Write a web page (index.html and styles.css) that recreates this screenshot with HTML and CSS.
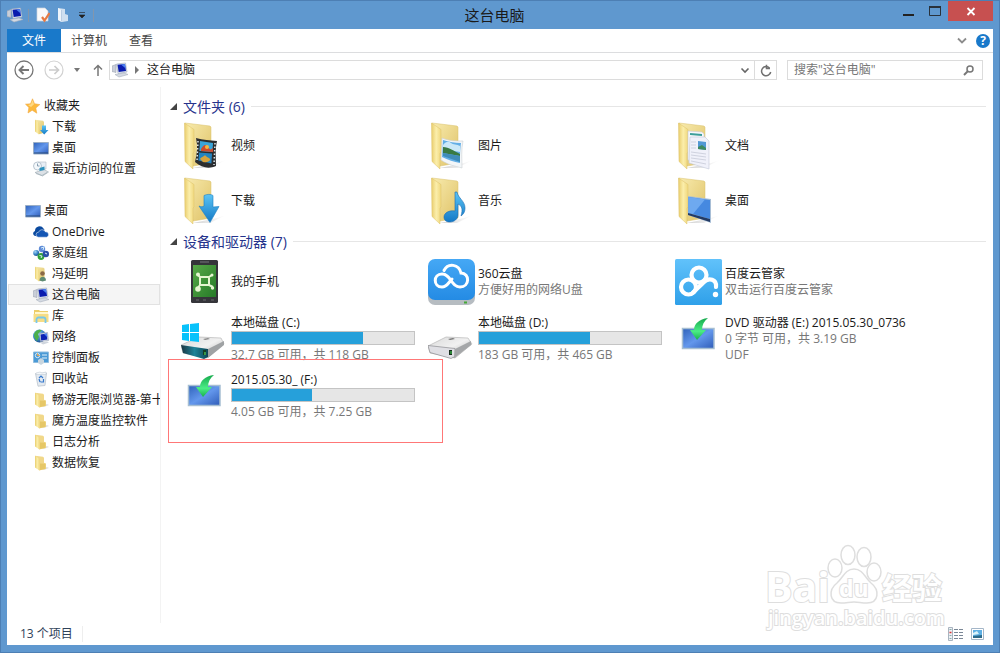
FILE: index.html
```html
<!DOCTYPE html>
<html lang="zh-CN">
<head>
<meta charset="utf-8">
<title>这台电脑</title>
<link rel="stylesheet" href="styles.css">
</head>
<body>
<svg class="defs" aria-hidden="true">
  <defs>
    <linearGradient id="gFlap" x1="0" y1="0" x2="1" y2="0"><stop offset="0" stop-color="#e9cd6c"/><stop offset=".5" stop-color="#fbeeab"/><stop offset="1" stop-color="#f0d87e"/></linearGradient>
    <linearGradient id="gBack" x1="0" y1="0" x2="1" y2="1"><stop offset="0" stop-color="#f8ebae"/><stop offset="1" stop-color="#dfc267"/></linearGradient>
    <linearGradient id="gBlue" x1="0" y1="0" x2="1" y2="1"><stop offset="0" stop-color="#2f62ba"/><stop offset=".5" stop-color="#6397ec"/><stop offset="1" stop-color="#2f5cb8"/></linearGradient>
    <linearGradient id="gArrow" x1="0" y1="0" x2="0" y2="1"><stop offset="0" stop-color="#5cc4f4"/><stop offset="1" stop-color="#1379c6"/></linearGradient>
    <linearGradient id="gGreen" x1="0" y1="0" x2="0" y2="1"><stop offset="0" stop-color="#15a94c"/><stop offset=".6" stop-color="#4bed86"/><stop offset="1" stop-color="#18b04c"/></linearGradient>
    <linearGradient id="gPhone" x1="0" y1="0" x2="1" y2="1"><stop offset="0" stop-color="#57a947"/><stop offset="1" stop-color="#267a28"/></linearGradient>
    <linearGradient id="gCloud" x1="0" y1="0" x2="0" y2="1"><stop offset="0" stop-color="#45a8f5"/><stop offset="1" stop-color="#248be4"/></linearGradient>
    <linearGradient id="gPan" x1="0" y1="0" x2="0" y2="1"><stop offset="0" stop-color="#61c2fb"/><stop offset="1" stop-color="#2fa0e9"/></linearGradient>
    <linearGradient id="gMetal" x1="0" y1="0" x2="1" y2="1"><stop offset="0" stop-color="#d9d9d9"/><stop offset=".5" stop-color="#f1f1f1"/><stop offset="1" stop-color="#a7a7a7"/></linearGradient>
    <linearGradient id="gTeal" x1="0" y1="0" x2="1" y2="0"><stop offset="0" stop-color="#1b3440"/><stop offset=".5" stop-color="#218398"/><stop offset="1" stop-color="#0d4554"/></linearGradient>
    <linearGradient id="gShade" x1="0" y1="0" x2="1" y2="0"><stop offset="0" stop-color="#999" stop-opacity=".45"/><stop offset="1" stop-color="#aaa" stop-opacity="0"/></linearGradient>
    <radialGradient id="gGlobe" cx=".35" cy=".3" r=".8"><stop offset="0" stop-color="#a9d8f5"/><stop offset=".5" stop-color="#3d8acb"/><stop offset="1" stop-color="#174582"/></radialGradient>
  </defs>

  <symbol id="pc" viewBox="0 0 16 16"><path d="M0 4l4-1.500v8l-4-1z" fill="#c9ced8" stroke="#9da5b2" stroke-width=".6"/><path d="M4.500 2l9-1 1.500 9-9 1.500z" fill="#dfe5ee" stroke="#9ba7ba" stroke-width=".6"/><path d="M5.500 2.700l7.500-.8 1 7-7.300 1.200z" fill="#0a1cae"/><path d="M9 2.400l4-.5.7 4.500z" fill="#4b7ff0"/><path d="M3 12.500l9-1.500 4 1.500-9 2.500z" fill="#d5dae2" stroke="#a7b0be" stroke-width=".6"/></symbol>
  <symbol id="folder" viewBox="0 0 16 16"><path d="M8 14l6-2 2 1-5 2z" fill="#999" opacity=".3"/><path d="M2 .8l8 .9 1 1v5l2 .8v5.500l-7 1.500z" fill="#f1d88a"/><path d="M7 8.500l5.500.2v5L7 15z" fill="#e6c767"/><path d="M2 .8L6.500 4v11.500L2 12.500z" fill="url(#gFlap)"/></symbol>
  <symbol id="down" viewBox="0 0 16 16"><path d="M2 .8l8 .9 1 1v11l-5 1.500z" fill="url(#gBack)"/><path d="M2 .8L6 4v11.500l-4-3z" fill="url(#gFlap)"/><path d="M9 6.500h4V11h2.500l-4.300 4.500L7 11h2z" fill="url(#gArrow)"/></symbol>
  <symbol id="desk" viewBox="0 0 16 16"><path d="M.5 2.500h15v11.500H.5z" fill="url(#gBlue)" stroke="#9aaec6"/><path d="M1 12.500h14v1H1z" fill="#284a7b"/></symbol>
  <symbol id="recent" viewBox="0 0 16 16"><path d="M5 1h8v7H5z" fill="#e8eef5" stroke="#aeb8c5" stroke-width=".6"/><circle cx="4.500" cy="5" r="4" fill="#f4f8fb" stroke="#a8b6c4" stroke-width=".8"/><path d="M4.500 2.500V5h2" stroke="#708aa2" fill="none" stroke-width=".8"/><path d="M2 11.500l9-3 4.500 2.500-6 4z" fill="#dce1e6" stroke="#9ba8b0" stroke-width=".6"/><path d="M6.500 7l5-1.500v3.500l-5 1z" fill="#2e91bd"/><path d="M3 12.500l6 2 5-3" stroke="#a3b2ba" fill="none" stroke-width=".8"/></symbol>
  <symbol id="onedrive" viewBox="0 0 16 16"><path d="M2 12A2.600 2.600 0 0 1 2 7 4.600 4.600 0 0 1 10.500 4.500a4 4 0 0 1 1 1.600L7 7.500 4 12z" fill="#0b4a9f"/><path d="M5.500 13.200a2.500 2.500 0 0 1 .1-5 3.700 3.700 0 0 1 6.900-.3 2.700 2.700 0 0 1 1 5.300z" fill="#1456b4" stroke="#fff" stroke-width=".5"/></symbol>
  <symbol id="home" viewBox="0 0 16 16"><circle cx="3.200" cy="8" r="3" fill="url(#gGlobe)"/><circle cx="9" cy="4" r="3.200" fill="#5f8cd8"/><circle cx="8" cy="11.500" r="3.400" fill="#31a03b"/><circle cx="12.800" cy="9" r="3.200" fill="#294fa7"/><path d="M8 3l3-1-1 3M6.500 10.500l2.500.5-1 2M12 8l2 1" stroke="#d6eefb" fill="none"/></symbol>
  <symbol id="user" viewBox="0 0 16 16"><path d="M2 .8l8.500.9 1 1v11l-5.500 1.500z" fill="url(#gBack)"/><path d="M2 .8L6 4v11.500l-4-3z" fill="url(#gFlap)"/><circle cx="9.500" cy="7.500" r="2.300" fill="#8b6a48"/><path d="M6.500 14.500c0-5 6.500-5 6.500 0l-3.500 1z" fill="#5f8c74"/></symbol>
  <symbol id="library" viewBox="0 0 16 16"><path d="M1 2h5l1 1h8v10H1z" fill="#eccd69"/><path d="M2 4h13v2.500H2z" fill="#fff7cf"/><path d="M.5 6h15v8H.5z" fill="#f6dd86"/><path d="M3.500 15v-3.500a2 2 0 0 1 2-2h5a2 2 0 0 1 2 2V15" fill="none" stroke="#79c8e8" stroke-width="1.800"/></symbol>
  <symbol id="network" viewBox="0 0 16 16"><circle cx="6.500" cy="7" r="6.500" fill="url(#gGlobe)"/><path d="M1.500 4c2-4 6-3.500 7-2.500L5 5l1 3-2 4C1 9 .5 6 1.500 4z" fill="#4baf4a"/><path d="M6.500 4.500l8-1 1 8-8 1z" fill="#dfe5ee" stroke="#8d99ad" stroke-width=".6"/><path d="M7.500 5.400l6.200-.8.7 6-6.200.8z" fill="#0d23b4"/><path d="M11 5l3-.4.500 4z" fill="#4b7ff0"/><path d="M7 13.500l7-1 2 1-6 2z" fill="#cfd5dd"/></symbol>
  <symbol id="control" viewBox="0 0 16 16"><path d="M.5 2h15v10.500H.5z" fill="#4b9ad6" stroke="#8fbde0"/><circle cx="4.500" cy="5.500" r="2.200" fill="none" stroke="#d8edfa"/><path d="M4.500 3.500v2h2" stroke="#f6a742" fill="none"/><path d="M9 5h5M9 8h5" stroke="#e3f2fb"/><path d="M5 10l3-2 3 2v3l-3 2-3-2z" fill="#c9d6df"/></symbol>
  <symbol id="bin" viewBox="0 0 16 16"><path d="M2.500 2.500L13.500 2 12 14.500l-7 .7z" fill="#e4eaf0" stroke="#b5bfc9" stroke-width=".7"/><path d="M3 2l4-1 2 1 4-1v2.500H3z" fill="#f4f7fa" stroke="#b9c2cc" stroke-width=".5"/><path d="M6 7l2-2 2 2M10.500 8v3H7.500M6 8l1 3" stroke="#3578cd" fill="none" stroke-width="1.200"/></symbol>
  <symbol id="star" viewBox="0 0 16 16"><path d="M7.500.8l2 4.900 5.300.9-4 3.400 1 5.200-4.600-3L3 15l.9-5.500L.5 6.200l5-.4z" fill="#fcb93c" stroke="#f2a944" stroke-width=".6"/><path d="M7.500 2L9 6.200 6 9 3 7l3-.8z" fill="#ffd982"/></symbol>

  <symbol id="base48" viewBox="0 0 48 48"><path d="M12 46l24-5 9-3-16 8z" fill="url(#gShade)"/><path d="M4 1l25 3 1 1v36l-18 3z" fill="url(#gBack)" stroke="#d9c06b" stroke-width=".5"/><path d="M3.500 1L13 7.500v22l-1 2V47l-8-7.500z" fill="url(#gFlap)" stroke="#dcc169" stroke-width=".5"/></symbol>
</svg>

<div class="window">
  <header class="titlebar">
    <div class="quick">
      <svg class="i16"><use href="#pc"/></svg><span class="sep"></span>
      <button aria-label="属性"><svg class="i16" viewBox="0 0 16 16"><path d="M3 1h8l3 3v10H3z" fill="#f9f9fa" stroke="#cbd3dc" stroke-width=".7"/><path d="M8 10l2.500 3.500L15.500 6" stroke="#e77942" stroke-width="2.200" fill="none"/></svg></button>
      <button aria-label="新建文件夹"><svg class="i16" viewBox="0 0 16 16"><path d="M3 1l7 1v5l3 1v6l-6 1-4-2z" fill="#cfdff0"/><path d="M3 1l3.500 2v12L3 13z" fill="#eef4fb"/><path d="M6.500 3v11" stroke="#a9c0da" stroke-width=".7"/></svg></button>
      <button class="narrow" aria-label="自定义"><svg width="8" height="8" viewBox="0 0 8 8"><path d="M1 1.500h6M1 4h6L4 7z" stroke="#222" stroke-width=".6" fill="#222"/></svg></button><span class="sep"></span>
    </div>
    <h1>这台电脑</h1>
    <div class="winbtns">
      <button aria-label="最小化"><svg width="12" height="12" viewBox="0 0 12 12"><path d="M1 10h11" stroke="#222" stroke-width="2"/></svg></button>
      <button aria-label="最大化"><svg width="12" height="10" viewBox="0 0 12 10"><path d="M.5.500h11v9H.5z" fill="none" stroke="#29323c"/><path d="M0 1h12" stroke="#29323c" stroke-width="2"/></svg></button>
      <button class="close" aria-label="关闭"><svg width="10" height="9" viewBox="0 0 10 9"><path d="M1.500 1l7 7M8.500 1l-7 7" stroke="#fff" stroke-width="1.800"/></svg></button>
    </div>
  </header>

  <div class="client">
    <nav class="ribbon">
      <button class="tab file">文件</button><button class="tab">计算机</button><button class="tab">查看</button>
      <span class="grow"></span>
      <button class="tool" aria-label="展开功能区"><svg width="12" height="8" viewBox="0 0 12 8"><path d="M2 1.500l4 4 4-4" fill="none" stroke="#8c8c8c" stroke-width="1.800"/></svg></button>
      <button class="help" aria-label="帮助">?</button>
    </nav>

    <div class="address">
      <button aria-label="后退"><svg width="20" height="20" viewBox="0 0 20 20"><circle cx="10" cy="10" r="9" fill="none" stroke="#777" stroke-width="1.300"/><path d="M15 10H6M9.500 6L5.500 10l4 4" fill="none" stroke="#777" stroke-width="1.900"/></svg></button>
      <button aria-label="前进"><svg width="20" height="20" viewBox="0 0 20 20"><circle cx="10" cy="10" r="9" fill="none" stroke="#d2d2d2" stroke-width="1.200"/><path d="M5 10h9M10.500 6l4 4-4 4" fill="none" stroke="#ccc" stroke-width="1.700"/></svg></button>
      <button class="hist" aria-label="历史"><svg width="6" height="4" viewBox="0 0 6 4"><path d="M0 0h6L3 4z" fill="#777"/></svg></button>
      <button aria-label="上移"><svg width="12" height="12" viewBox="0 0 12 12"><path d="M6 12V2M2 5.500L6 1.500l4 4" fill="none" stroke="#777" stroke-width="1.500"/></svg></button>
      <div class="path">
        <svg class="i16"><use href="#pc"/></svg>
        <svg class="crumb" width="4" height="8" viewBox="0 0 4 8"><path d="M0 0l4 4-4 4z" fill="#777"/></svg>
        <a href="#pc">这台电脑</a><span class="grow"></span>
        <button aria-label="下拉"><svg width="10" height="7" viewBox="0 0 10 7"><path d="M1.500 1.500L5 5l3.500-3.500" fill="none" stroke="#666" stroke-width="1.600"/></svg></button>
        <button class="refresh" aria-label="刷新"><svg width="12" height="13" viewBox="0 0 12 13"><path d="M9.500 4A4.600 4.600 0 1 0 10.700 8M6.500.8V4.500H10" fill="none" stroke="#707070" stroke-width="1.500"/></svg></button>
      </div>
      <label class="search"><input type="text" aria-label="搜索" placeholder='搜索"这台电脑"'><svg width="11" height="11" viewBox="0 0 11 11"><circle cx="7" cy="4" r="3" fill="none" stroke="#777" stroke-width="1.500"/><path d="M5 6L1 10" stroke="#777" stroke-width="1.900"/></svg></label>
    </div>

    <div class="body">
      <aside class="tree">
        <ul>
          <li class="root"><svg class="i16"><use href="#star"/></svg>收藏夹</li>
          <li><svg class="i16"><use href="#down"/></svg>下载</li>
          <li><svg class="i16"><use href="#desk"/></svg>桌面</li>
          <li><svg class="i16"><use href="#recent"/></svg>最近访问的位置</li>
        </ul>
        <ul>
          <li class="root"><svg class="i16"><use href="#desk"/></svg>桌面</li>
          <li><svg class="i16"><use href="#onedrive"/></svg>OneDrive</li>
          <li><svg class="i16"><use href="#home"/></svg>家庭组</li>
          <li><svg class="i16"><use href="#user"/></svg>冯延明</li>
          <li class="selected"><svg class="i16"><use href="#pc"/></svg>这台电脑</li>
          <li><svg class="i16"><use href="#library"/></svg>库</li>
          <li><svg class="i16"><use href="#network"/></svg>网络</li>
          <li><svg class="i16"><use href="#control"/></svg>控制面板</li>
          <li><svg class="i16"><use href="#bin"/></svg>回收站</li>
          <li><svg class="i16"><use href="#folder"/></svg>畅游无限浏览器-第十</li>
          <li><svg class="i16"><use href="#folder"/></svg>魔方温度监控软件</li>
          <li><svg class="i16"><use href="#folder"/></svg>日志分析</li>
          <li><svg class="i16"><use href="#folder"/></svg>数据恢复</li>
        </ul>
      </aside>

      <main class="content">
        <section>
          <h2><svg width="7" height="7" viewBox="0 0 7 7"><path d="M7 0v7H0z" fill="#444"/></svg>文件夹 (6)</h2>
          <div class="grid folders">
            <div class="item"><svg class="i48" viewBox="0 0 48 48"><use href="#base48"/><path d="M15 16c7 2 14 2 21 3-2 9-1 16-1 25-7 3-14 2-21-4 2-8 3-16 1-24z" fill="#2b2d2f"/><path d="M19 19l13 2-.6 9-13-1z" fill="#3aa4d8"/><path d="M18 30.500l13 1-.6 10-13-3z" fill="#2384c0"/><path d="M20 27c3-5 5-5 7-2s3 3 5 1v4l-12-1z" fill="#cf4b2c"/><path d="M19 37c2-3 4-2 5-4 2 3 4 2 5 4s-4 4-7 3z" fill="#d8a33c"/><circle cx="26" cy="25" r="2" fill="#f2b640"/><path d="M17 19l-1 20M34 21l-1 22" stroke="#dce7ec" stroke-width="1.500" stroke-dasharray="1.500 2"/></svg><div class="info"><p>视频</p></div></div>
            <div class="item"><svg class="i48" viewBox="0 0 48 48"><use href="#base48"/><path d="M14 16c7 3 14 3 21 3-2 9-1 18-1 27-7-2-14-3-21-8z" fill="#f3f6f8" stroke="#cbd0d4" stroke-width=".6"/><path d="M15 18c6 2 12 3 18 3-1 7-1 12-1 20-6-1-12-3-18-6z" fill="#62aee6"/><path d="M15 23c3-4 6-4 8-2s6 1 9 3v6l-17-3z" fill="#cae8f8"/><path d="M15 25c6 0 11 4 17 7v2l-17-3z" fill="#397a43"/><path d="M15 31l17 3v6l-17-6z" fill="#3f8cb9"/></svg><div class="info"><p>图片</p></div></div>
            <div class="item"><svg class="i48" viewBox="0 0 48 48"><use href="#base48"/><path d="M13 9l14 1 2 2v29l-16-3z" fill="#f7f8fc" stroke="#c6cad8" stroke-width=".6"/><path d="M15 12l12 1" stroke="#3c9e99" stroke-width="2"/><path d="M15 15l15 0 4 4v28l-20-6z" fill="#f0f1fa" stroke="#c3c7d8" stroke-width=".6"/><path d="M23 19l8 1v8l-8-1z" fill="#5298d4"/><path d="M23 25l4-2 4 3v2l-8-1z" fill="#3f8a60"/><path d="M16 20h5M16 23h5M16 26h5M16 30l15 2M16 33l15 2M16 36l15 2M16 39l15 3" stroke="#cfd2df"/></svg><div class="info"><p>文档</p></div></div>
            <div class="item"><svg class="i48" viewBox="0 0 48 48"><use href="#base48"/><path d="M23 18.500c3-1.500 7-1.500 9 0V30l6-.5L29 45.500 18 29c2 1 4 1 5 0z" fill="url(#gArrow)" stroke="#1c7fc5" stroke-width=".6"/></svg><div class="info"><p>下载</p></div></div>
            <div class="item"><svg class="i48" viewBox="0 0 48 48"><use href="#base48"/><path d="M27 15h2c1 6 8 9 8 16 0 3-1 6-4 8 2-7 1-10-3-12v11c0 4-4 7-8 7s-6-2-6-5c0-4 5-7 11-6z" fill="url(#gArrow)" stroke="#1869b2" stroke-width=".6"/></svg><div class="info"><p>音乐</p></div></div>
            <div class="item"><svg class="i48" viewBox="0 0 48 48"><use href="#base48"/><path d="M13 19l23 3v24l-23-8z" fill="#a8bed6"/><path d="M13.500 20l21.500 3v19l-21.500-6z" fill="#4689e0"/><path d="M13.500 20L30 22.500 18 37l-4.500-1z" fill="#6ea9f0"/><path d="M13 36l22 6v3l-22-7z" fill="#233b64"/></svg><div class="info"><p>桌面</p></div></div>
          </div>
        </section>

        <section>
          <h2><svg width="7" height="7" viewBox="0 0 7 7"><path d="M7 0v7H0z" fill="#444"/></svg>设备和驱动器 (7)</h2>
          <div class="grid devices">
            <div class="item"><svg class="i48" viewBox="0 0 48 48"><rect x="10" y="2" width="27" height="43" rx="1.500" fill="#35353a"/><path d="M19 4h9" stroke="#77777b"/><path d="M12 7h23v32H12z" fill="url(#gPhone)"/><path d="M19 19h9v8h-9zM19 19l-3-3M28 19l3-2M28 27l4 2M19 27l-3 4" stroke="#e5f5d0" stroke-width="2" fill="none"/><circle cx="17" cy="16.500" r="2" fill="#e5f5d0"/><circle cx="31" cy="17" r="1.500" fill="#e5f5d0"/><circle cx="17" cy="31" r="2.800" fill="#e5f5d0"/><circle cx="31.500" cy="30" r="1.700" fill="#e5f5d0"/><path d="M15 42h3M22 42h3M30 42h3" stroke="#6a6a6e"/></svg><div class="info"><p>我的手机</p></div></div>
            <div class="item"><svg class="i48" viewBox="0 0 48 48"><rect y="4" width="47" height="43" rx="7" fill="#b6bcc1"/><rect y="1" width="47" height="41" rx="7" fill="url(#gCloud)"/><path d="M16 12.500C20 4.500 31 6 33 15c9 0 9 14-1 14-9 0-9-13-18-13-9 0-9 13 0 13 5 0 6-4 10-8" fill="none" stroke="#fff" stroke-width="3" stroke-linecap="round"/><path d="M36 44.500h3" stroke="#45a936" stroke-width="2"/></svg><div class="info"><p>360云盘</p><p class="sub">方便好用的网络U盘</p></div></div>
            <div class="item"><svg class="i48" viewBox="0 0 48 48"><rect y="1" width="47" height="46" rx="1.500" fill="url(#gPan)"/><circle cx="24" cy="17" r="7.500" fill="none" stroke="#fff" stroke-width="4.200"/><circle cx="13.500" cy="29" r="7.500" fill="none" stroke="#fff" stroke-width="4.200"/><path d="M18 34.500L28 25c6-7 14-3 13 4" fill="none" stroke="#fff" stroke-width="4.200" stroke-linecap="round"/><circle cx="40.500" cy="36.500" r="2.700" fill="#fff"/></svg><div class="info"><p>百度云管家</p><p class="sub">双击运行百度云管家</p></div></div>

            <div class="item"><svg class="i48" viewBox="0 0 48 48"><path d="M0 30l18-8 22 1 3 6-17 14-24-5z" fill="url(#gMetal)" stroke="#a0a0a0" stroke-width=".5"/><path d="M0 30l27 4v8l-4 2-21-6z" fill="url(#gTeal)"/><path d="M27 34l16-8v4L27 43z" fill="#9fa2a4"/><path d="M22 35h3v5h-3z" fill="#153d22"/><path d="M24 37v3" stroke="#5cf26c"/><path d="M1 10l7-1v8H1zM9 9l9-1v9H9zM1 18h7v8l-7-1zM9 18h9v9l-9-1z" fill="#08c2fb"/><path d="M22 24l5-1 2 1-5 1z" fill="#888"/></svg><div class="info"><p>本地磁盘 (C:)</p><div class="bar"><span style="width:72%"></span></div><p class="sub">32.7 GB 可用，共 118 GB</p></div></div>
            <div class="item"><svg class="i48" viewBox="0 0 48 48"><path d="M0 31l18-9 22 1 4 6-17 14-25-5z" fill="url(#gMetal)" stroke="#a0a0a0" stroke-width=".5"/><path d="M0 30.500l27 3v8l-4 2-21-6z" fill="#dfdfe4" stroke="#8d8d91" stroke-width=".7"/><path d="M27 34l16-8v4L26 43z" fill="#a5a7a9"/><path d="M21 35h3v5h-3z" fill="#192d1e"/><path d="M23 36v3" stroke="#40df50"/><path d="M20 24l5-1 2 1-5 1z" fill="#777"/></svg><div class="info"><p>本地磁盘 (D:)</p><div class="bar"><span style="width:61%"></span></div><p class="sub">183 GB 可用，共 465 GB</p></div></div>
            <div class="item"><svg class="i48" viewBox="0 0 48 48"><path d="M7.500 13.500h31.500v20H7.500z" fill="url(#gBlue)" stroke="#a6bed2" stroke-width="1.500"/><path d="M33 3c-9 1-14 6-14 12h-4l7 10 9-10h-4c0-5 2-9 6-12z" fill="url(#gGreen)"/></svg><div class="info"><p>DVD 驱动器 (E:) 2015.05.30_0736</p><p class="sub">0 字节 可用，共 3.19 GB</p><p class="sub">UDF</p></div></div>

            <div class="item marked"><svg class="i48" viewBox="0 0 48 48"><path d="M7.500 13.500h31.500v20H7.500z" fill="url(#gBlue)" stroke="#a6bed2" stroke-width="1.500"/><path d="M33 3c-9 1-14 6-14 12h-4l7 10 9-10h-4c0-5 2-9 6-12z" fill="url(#gGreen)"/></svg><div class="info"><p>2015.05.30_ (F:)</p><div class="bar"><span style="width:44%"></span></div><p class="sub">4.05 GB 可用，共 7.25 GB</p></div></div>
          </div>
        </section>
      </main>
    </div>

    <footer class="status">
      <span class="count">13 个项目</span><span class="grow"></span>
      <button aria-label="详细信息"><svg width="16" height="14" viewBox="0 0 16 14"><path d="M.5.500h4v13h-4z" fill="#eef1f5" stroke="#a9b4c0"/><path d="M1.500 5.500h2" stroke="#d33" stroke-width="1.500"/><path d="M1.500 2.500h2M1.500 8.500h2M1.500 11.500h2" stroke="#8aa"/><path d="M6 2.500h10M6 5.500h10M6 8.500h10M6 11.500h10" stroke="#7a8796" stroke-dasharray="4 1"/></svg></button>
      <button aria-label="大图标"><svg width="13" height="12" viewBox="0 0 13 12"><path d="M.5.500h12v11H.5z" fill="#fff" stroke="#a4b6c8"/><path d="M2 2h9v8H2z" fill="#5eb0e4"/><path d="M2 5l4-2 2 3-6 1z" fill="#d9f2fb"/><path d="M2 8l9-1v3H2z" fill="#2c6a8a"/></svg></button>
    </footer>

    <svg class="watermark" width="180" height="90" viewBox="0 0 180 90">
      <g fill="#fff" stroke="#dedede" stroke-width="1.500">
        <ellipse cx="68" cy="27" rx="7" ry="9"/><ellipse cx="81" cy="14" rx="7" ry="9.500"/><ellipse cx="97" cy="16" rx="7" ry="9.500"/><ellipse cx="107" cy="31" rx="7" ry="9"/>
        <path d="M87 28c9 0 11 9 17 14 9 7 8 20-4 20-6 0-8-1-13-1s-7 1-13 1c-12 0-13-13-4-20 6-5 8-14 17-14z"/>
      </g>
      <g class="mark">
        <text x="-2" y="61" font-size="41">Bai</text><text x="72" y="56" font-size="23">du</text><text x="115" y="58" font-size="30">经验</text><text class="url" x="1" y="84" font-size="20">jingyan.baidu.com</text>
      </g>
    </svg>
  </div>
</div>
</body>
</html>
```
FILE: styles.css
```css
*, *::after { box-sizing: border-box; }
body { margin: 0; font: 12px/16px "Open Sans", "Noto Sans", "Noto Sans CJK SC", sans-serif; color: #1a1a1a; }
h1, h2, p, ul { margin: 0; padding: 0; font-weight: 400; }
ul { list-style: none; }
button { border: 0; padding: 0; background: none; font: inherit; color: inherit; display: flex; align-items: center; justify-content: center; }
svg { flex: none; display: block; }
.defs { position: absolute; width: 0; height: 0; }
.i16 { width: 16px; height: 16px; }
.i48 { width: 48px; height: 48px; }
.grow { flex: 1; }

.window { min-height: 100vh; display: flex; flex-direction: column; background: #5f98cf; border: 1px solid #4d7fb4; padding: 0 6px 7px; }
.titlebar { display: flex; height: 28px; }
.quick { display: flex; align-items: center; gap: 5px; width: 88px; }
.quick .narrow { width: 12px; }
.sep { width: 1px; height: 13px; background: #8296ad; }
h1 { flex: 1; text-align: center; font-size: 15px; line-height: 28px; }
.winbtns { display: flex; align-items: flex-start; }
.winbtns button { width: 27px; height: 20px; }
.winbtns .close { width: 45px; background: #c75050; }

.client { flex: 1; display: flex; flex-direction: column; background: #fff; position: relative; }
.ribbon { display: flex; align-items: center; height: 24px; border-bottom: 1px solid #dcdddf; color: #444; }
.tab { height: 23px; padding: 0 10px; }
.tab + .tab { margin-right: 2px; }
.tab.file { width: 54px; background: #1979ca; color: #fff; }
.tool { width: 28px; height: 20px; }
.help { width: 14px; height: 14px; margin-right: 3px; border-radius: 7px; background: #1979ca; color: #fff; font-weight: 700; }

.address { display: flex; align-items: center; height: 34px; padding: 0 10px 0 7px; }
.address > button + button { margin-left: 10px; }
.address > button.hist + button { margin-left: 12px; }
.path { flex: 1; display: flex; align-items: center; height: 20px; margin: 0 10px 0 5px; border: 1px solid #dcdcdc; padding-left: 2px; }
.path a { color: inherit; text-decoration: none; }
.crumb { margin: 0 8px 0 7px; }
.path button { width: 18px; height: 18px; }
.path .refresh { width: 22px; border-left: 1px solid #dcdcdc; }
.search { display: flex; align-items: center; width: 196px; height: 20px; border: 1px solid #dcdcdc; padding: 0 8px 0 6px; }
.search input { flex: 1; min-width: 0; border: 0; padding: 0; outline: 0; font: inherit; background: none; }
.search input::placeholder { color: #777; opacity: 1; }

.body { flex: 1; display: flex; }
.tree { width: 154px; padding: 8px 0 0 1px; border-right: 1px solid #f3f3f3; }
.tree ul + ul { margin-top: 21px; }
.tree li { display: flex; align-items: center; gap: 3px; height: 21px; padding-left: 25px; overflow: hidden; white-space: nowrap; }
.tree li.root { padding-left: 17px; }
.tree li.selected { background: #f5f5f5; box-shadow: inset 0 0 0 1px #e2e2e2; }

.content { flex: 1; min-width: 0; padding: 8px 7px 0 9px; }
h2 { display: flex; align-items: center; gap: 6px; height: 23px; font-size: 14px; color: #25338c; }
h2::after { content: ""; flex: 1; height: 1px; background: #e6e6e6; }
section + section { margin-top: 2px; }
.grid { display: grid; grid-template-columns: repeat(auto-fill, 247px); padding-left: 11px; }
.folders { grid-auto-rows: 55px; }
.devices { grid-auto-rows: 57px; }
.item { position: relative; display: flex; align-items: center; gap: 2px; padding-right: 13px; }
.info { flex: 1; min-width: 0; white-space: nowrap; }
.sub { color: #777; }
.bar { height: 14px; margin-bottom: 2px; border: 1px solid #c4c4c4; background: #e6e6e6; }
.bar span { display: block; height: 100%; background: #26a0da; }
.marked::after { content: ""; position: absolute; left: -13px; top: -8px; width: 275px; height: 84px; border: 1px solid #f77; }

.status { display: flex; align-items: center; height: 22px; padding: 0 9px 0 13px; gap: 7px; color: #2f4259; }
.count { padding-right: 9px; border-right: 1px solid #eee; }

.watermark { position: absolute; right: 46px; bottom: 14px; overflow: visible; }
.mark { font-family: "Open Sans", "Noto Sans CJK SC", sans-serif; font-weight: 700; fill: #fff; stroke: #dedede; stroke-width: 2px; paint-order: stroke; }
.mark .url { font-weight: 600; }
```
